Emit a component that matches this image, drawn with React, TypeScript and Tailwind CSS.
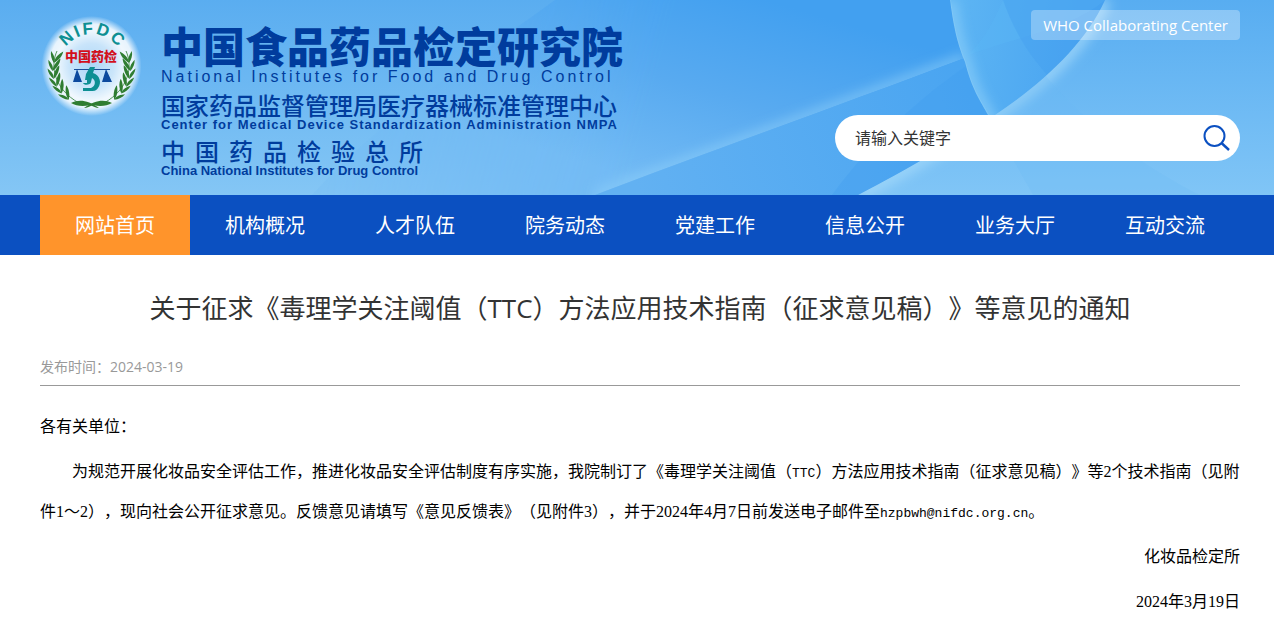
const navItems = ["网站首页", "机构概况", "人才队伍", "院务动态", "党建工作", "信息公开", "业务大厅", "互动交流"];

const leaves = [
  { x: 18, y: 48, r: 12 },
  { x: 16, y: 56, r: 4 },
  { x: 16, y: 64, r: -6 },
  { x: 18, y: 72, r: -16 },
  { x: 22, y: 79, r: -26 },
  { x: 28, y: 86, r: -38 },
];

function Branch() {
  return (
    <g fill="#2f7d32">
      <path d="M20 42C13 57 17 80 42 94" fill="none" stroke="#2f7d32" strokeWidth="0.8" />
      {leaves.map((leaf) => (
        <g key={leaf.y} transform={`translate(${leaf.x} ${leaf.y}) rotate(${leaf.r})`}>
          <path d="M0 6C-3 3-5-1-5-5C-2-2 1 1 0 6Z" />
          <path d="M0 6C0 1 3-4 7-7C7-2 4 3 0 6Z" />
        </g>
      ))}
      <path d="M34 94C42 90 51 91 62 99C59 99 56 97 53 96C46 98 39 97 34 94Z" />
    </g>
  );
}

function Emblem() {
  return (
    <svg viewBox="0 0 110 110" className="h-[110px] w-[110px] shrink-0" role="img" aria-label="NIFDC">
      <defs>
        <radialGradient id="halo">
          <stop offset="0" stopColor="#fff" stopOpacity="0.45" />
          <stop offset="0.45" stopColor="#fff" stopOpacity="0.65" />
          <stop offset="0.7" stopColor="#fff" stopOpacity="0.9" />
          <stop offset="0.84" stopColor="#fff" stopOpacity="0.85" />
          <stop offset="1" stopColor="#fff" stopOpacity="0" />
        </radialGradient>
        <path id="arc" d="M23 57A32 32 0 0 1 87 57" />
      </defs>
      <circle cx="54.5" cy="57" r="50" fill="url(#halo)" />
      <text fill="#0d8f93" fontFamily="Liberation Sans" fontSize="17" fontWeight="700" letterSpacing="2">
        <textPath href="#arc" startOffset="51%" textAnchor="middle">
          NIFDC
        </textPath>
      </text>
      <Branch />
      <g transform="matrix(-1 0 0 1 109 0)">
        <Branch />
      </g>
      <text x="54" y="52" textAnchor="middle" fill="#d3101c" fontFamily="Noto Sans CJK SC" fontSize="13" fontWeight="900">
        中国药检
      </text>
      <path d="M37 60.5H73" stroke="#1c4f9c" strokeWidth="1" />
      <path d="M40 60L45 73H36Z M69 60L75 73H65Z" fill="#0c4a9e" />
      <path
        d="M53 58H58L56 64C63 66 65 74 61 79C59 82 57 82 54 82H46V79H54C59 77 59 71 55 69L54 73C54 76 47 77 46 74H50V71H48L49 65Z"
        fill="#0d8f93"
      />
    </svg>
  );
}

const ray = "M595 195C700 155 840 105 965 58";
const leftRim = "M950 0C954 30 958 45 965 62C972 90 980 100 988 115C1003 142 1018 170 1033 195";
const rightRim = "M1105 0C1085 45 1040 85 995 115C940 150 910 168 858 195";

function Backdrop() {
  return (
    <svg
      viewBox="0 0 1274 195"
      preserveAspectRatio="none"
      className="absolute inset-0 h-full w-full"
      aria-hidden="true"
    >
      <defs>
        <linearGradient id="sky" x1="0" y1="0" x2="0" y2="1">
          <stop offset="0" stopColor="#5aadf0" />
          <stop offset="1" stopColor="#84c6f5" />
        </linearGradient>
        <linearGradient id="deep" gradientUnits="userSpaceOnUse" x1="700" y1="-20" x2="640" y2="180">
          <stop offset="0" stopColor="#42a0f0" />
          <stop offset="0.5" stopColor="#58aaf0" />
          <stop offset="1" stopColor="#72baf4" />
        </linearGradient>
        <linearGradient id="deepMask" gradientUnits="userSpaceOnUse" x1="340" y1="60" x2="640" y2="140">
          <stop offset="0" stopColor="#fff" stopOpacity="0.2" />
          <stop offset="1" stopColor="#fff" />
        </linearGradient>
        <mask id="fade">
          <rect width="1274" height="195" fill="url(#deepMask)" />
        </mask>
        <linearGradient id="low" gradientUnits="userSpaceOnUse" x1="640" y1="195" x2="960" y2="70">
          <stop offset="0" stopColor="#62b1f2" />
          <stop offset="1" stopColor="#4aa5f1" />
        </linearGradient>
        <linearGradient id="middle" gradientUnits="userSpaceOnUse" x1="960" y1="20" x2="1080" y2="40">
          <stop offset="0" stopColor="#5cb4f3" />
          <stop offset="1" stopColor="#4aa5f1" />
        </linearGradient>
        <linearGradient id="right" x1="0" y1="0" x2="0" y2="1">
          <stop offset="0" stopColor="#58adf1" />
          <stop offset="1" stopColor="#80c5f6" />
        </linearGradient>
        <filter id="soft" x="-20%" y="-20%" width="140%" height="140%">
          <feGaussianBlur stdDeviation="6" />
        </filter>
        <clipPath id="aboveRay">
          <path d={`${ray}L950 0H555L312 195Z`} />
        </clipPath>
        <clipPath id="insideLeft">
          <path d={`${leftRim}H1274V0Z`} />
        </clipPath>
        <clipPath id="insideRight">
          <path d={`${rightRim}H1274V0Z`} />
        </clipPath>
      </defs>
      <rect width="1274" height="195" fill="url(#sky)" />
      <path d="M555 0C480 55 390 110 312 195H1274V0Z" fill="url(#deep)" mask="url(#fade)" />
      <g clipPath="url(#aboveRay)" fill="none" stroke="#8fd0f9">
        <path d={ray} strokeWidth="9" strokeOpacity="0.7" filter="url(#soft)" />
      </g>
      <path d={`${ray}L1100 20V195Z`} fill="url(#low)" />
      <path d="M966 66C910 105 865 150 832 195H1033L988 115Z" fill="#3f9cee" fillOpacity="0.3" />
      <g clipPath="url(#insideLeft)" fill="none">
        <path d={`${leftRim}H1274V0Z`} fill="url(#middle)" />
        <path d="M966 56C1010 38 1070 30 1105 0H1003C990 30 980 45 966 56Z" fill="#5ab6f5" fillOpacity="0.4" />
        <path d="M1003 0C1012 25 1024 50 1050 78L1105 30V0Z" fill="#459fef" fillOpacity="0.45" />
        <path d={leftRim} stroke="#8ed0fa" strokeWidth="12" strokeOpacity="0.7" filter="url(#soft)" />
        <path d={leftRim} stroke="#a5dcfb" strokeWidth="2" strokeOpacity="0.2" />
      </g>
      <g clipPath="url(#insideRight)" fill="none">
        <path d={`${rightRim}H1274V0Z`} fill="url(#right)" />
        <path d={rightRim} stroke="#a9ddfb" strokeWidth="13" strokeOpacity="0.7" filter="url(#soft)" />
        <path d="M988 115L1033 195H1200C1150 170 1090 130 1045 75Z" fill="#68b8f4" fillOpacity="0.2" />
      </g>
    </svg>
  );
}

function Header() {
  return (
    <header className="relative h-[195px]">
      <Backdrop />
      <div className="relative flex h-full justify-between pr-[34px] pl-[37px]">
        <div className="flex pt-[9px]">
          <Emblem />
          <h1 className="ml-[14px] pt-3 whitespace-nowrap text-[#003c9d]">
            <span className="block font-['Noto_Sans_CJK_SC'] text-[42px] leading-[48px] font-black">中国食品药品检定研究院</span>
            <span className="block text-[16px] leading-[16px] font-medium tracking-[3px]">
              National Institutes for Food and Drug Control
            </span>
            <span className="mt-2 block font-['Noto_Sans_CJK_SC'] text-[24px] leading-[24px] font-medium">
              国家药品监督管理局医疗器械标准管理中心
            </span>
            <span className="block text-[13px] leading-[16px] font-bold tracking-[1px]">
              Center for Medical Device Standardization Administration NMPA
            </span>
            <span className="mt-[6px] block font-['Noto_Sans_CJK_SC'] text-[24px] leading-[24px] font-medium tracking-[10px]">
              中国药品检验总所
            </span>
            <span className="block text-[13px] leading-[16px] font-bold">
              China National Institutes for Drug Control
            </span>
          </h1>
        </div>
        <div className="flex flex-col items-end pt-[10px] font-['Open_Sans','Noto_Sans_CJK_SC',sans-serif]">
          <a href="#who" className="rounded bg-white/30 px-3 text-[15px] leading-[30px] text-white">
            WHO Collaborating Center
          </a>
          <form className="mt-[75px] flex h-[46px] w-[405px] items-center rounded-full bg-white pr-[9px] pl-5">
            <input
              type="text"
              aria-label="请输入关键字"
              placeholder="请输入关键字"
              className="min-w-0 flex-1 text-[16px] text-[#333] outline-none placeholder:text-[#333]"
            />
            <button type="submit" aria-label="搜索">
              <svg viewBox="0 0 30 30" className="size-[30px]" fill="none" stroke="#0b50c1" strokeWidth="2">
                <circle cx="13.5" cy="13" r="10" />
                <path d="M20.5 20L28 27" strokeWidth="2.4" />
              </svg>
            </button>
          </form>
        </div>
      </div>
    </header>
  );
}

export default function App() {
  return (
    <div className="min-h-screen bg-white font-['Liberation_Sans','Noto_Sans_CJK_SC',sans-serif] [text-spacing-trim:space-all]">
      <Header />
      <nav className="bg-[#0b50c1] pr-[34px] pl-10">
        <ul className="grid grid-cols-8 text-center font-['Noto_Sans_CJK_SC'] text-[20px] leading-[60px] text-white">
          {navItems.map((item, i) => (
            <li key={item}>
              <a href="#nav" className={i === 0 ? "block bg-[#ff942b]" : "block"}>
                {item}
              </a>
            </li>
          ))}
        </ul>
      </nav>
      <main className="pr-[34px] pl-10">
        <h2 className="pt-[33px] text-center font-['Open_Sans','Noto_Sans_CJK_SC',sans-serif] text-[26px] leading-[40px] text-[#333]">
          关于征求《毒理学关注阈值（TTC）方法应用技术指南（征求意见稿）》等意见的通知
        </h2>
        <p className="mt-6 border-b border-[#999] pb-[3px] font-['Open_Sans','Noto_Sans_CJK_SC',sans-serif] text-[14px] leading-[30px] text-[#999]">
          发布时间：2024-03-19
        </p>
        <article className="mt-[21px] space-y-[5px] font-['Liberation_Serif','Noto_Sans_CJK_SC',serif] text-[16px] leading-[40px] text-black">
          <p>各有关单位：</p>
          <p className="indent-8">
            为规范开展化妆品安全评估工作，推进化妆品安全评估制度有序实施，我院制订了《毒理学关注阈值（
            <span className="font-['Liberation_Mono'] text-[13px] leading-none">TTC</span>
            ）方法应用技术指南（征求意见稿）》等2个技术指南（见附件1～2），现向社会公开征求意见。反馈意见请填写《意见反馈表》（见附件3），并于2024年4月7日前发送电子邮件至
            <span className="font-['Liberation_Mono'] text-[13px] leading-none">hzpbwh@nifdc.org.cn</span>。
          </p>
          <p className="text-right">化妆品检定所</p>
          <p className="text-right">2024年3月19日</p>
        </article>
      </main>
    </div>
  );
}
